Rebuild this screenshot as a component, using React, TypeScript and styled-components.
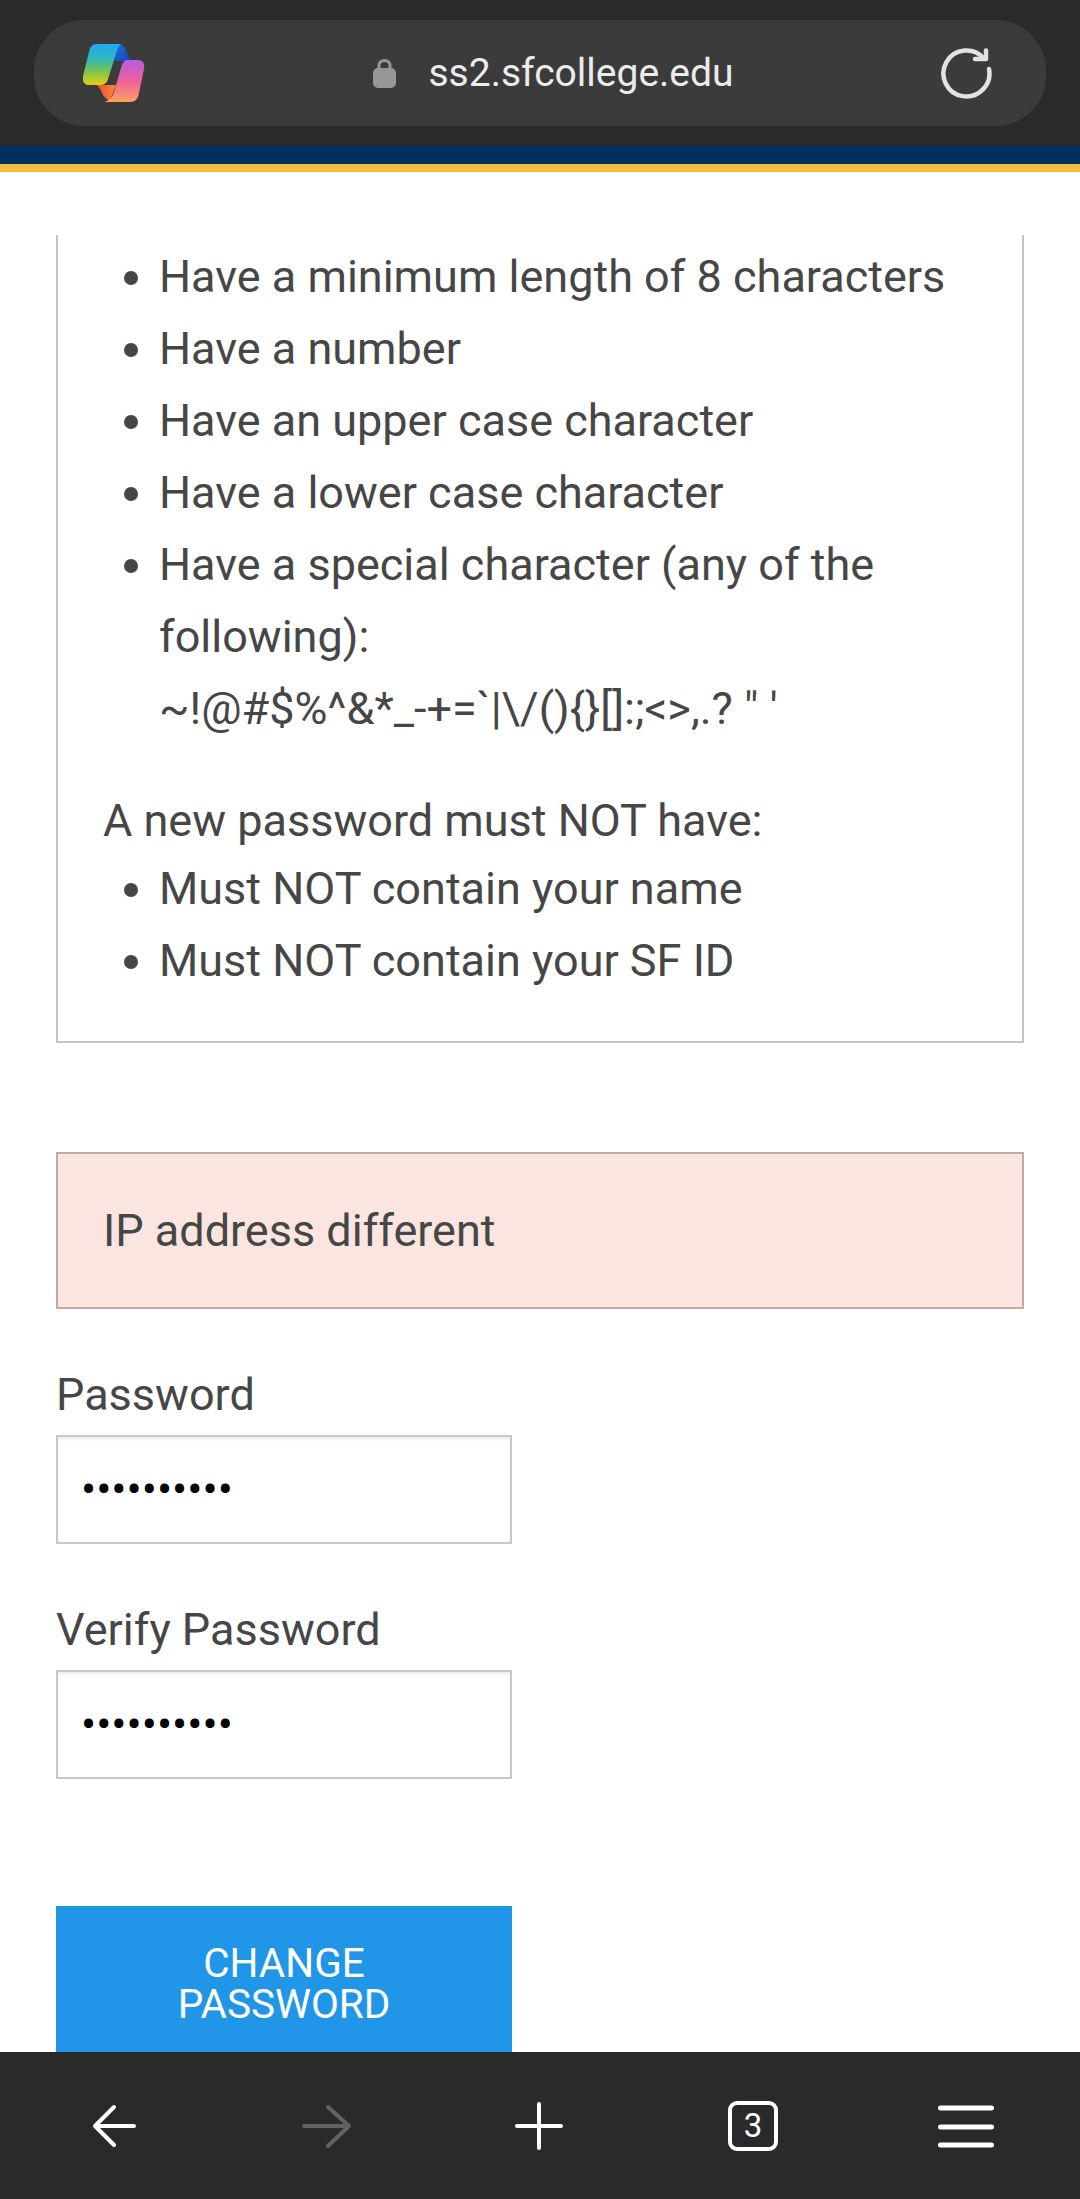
import React from "react";
import styled, { createGlobalStyle } from "styled-components";

const Global = createGlobalStyle`
  html, body { margin: 0; padding: 0; background: #fff; }
  #root { width: 1080px; height: 2199px; }
  * { box-sizing: border-box; }
`;

const Page = styled.div`
  width: 1080px;
  height: 2199px;
  display: flex;
  flex-direction: column;
  overflow: hidden;
  font-family: Roboto, "Liberation Sans", sans-serif;
  color: #464646;
  background: #fff;
`;

const TopBar = styled.header`
  flex: none;
  height: 146px;
  padding: 20px 34px;
  background: #2a2a2a;
`;

const AddressBar = styled.div`
  height: 106px;
  border-radius: 50px;
  background: #3b3b3b;
  display: flex;
  align-items: center;
  padding: 0 54px 0 49px;
`;

const AddressCenter = styled.div`
  flex: 1;
  display: flex;
  align-items: center;
  justify-content: center;
  gap: 32px;
  padding-left: 22px;
`;

const Url = styled.span`
  font-size: 39px;
  color: #ececec;
  line-height: 44px;
`;

const SiteStripe = styled.div`
  flex: none;
  height: 26px;
  background: #00305f;
  border-bottom: 8px solid #f6bb3c;
`;

const Main = styled.main`
  flex: 1;
  min-height: 0;
  overflow: hidden;
  padding: 63px 56px 0;
`;

const InfoCard = styled.section`
  border: 2px solid #c4c4c4;
  border-top: none;
  padding: 6px 46px 44px 45px;
  font-size: 45px;
  line-height: 72px;
`;

const RuleList = styled.ul`
  margin: 0;
  padding: 0 0 0 56px;
`;

const Rule = styled.li``;

const Symbols = styled.span`
  display: block;
`;

const Lead = styled.p`
  margin: 48px 0 4px;
  line-height: 56px;
`;

const Alert = styled.div`
  margin-top: 109px;
  height: 157px;
  padding: 0 45px;
  display: flex;
  align-items: center;
  font-size: 45px;
  background: #fbe5e1;
  border: 2px solid #c2aaa7;
`;

const Field = styled.div<{ $top: number }>`
  margin-top: ${(p) => p.$top}px;
  width: 456px;
`;

const Label = styled.label`
  display: block;
  font-size: 45px;
  line-height: 56px;
  margin-bottom: 12px;
`;

const PasswordInput = styled.input`
  display: block;
  width: 456px;
  height: 109px;
  padding: 0 23px;
  border: 2px solid #c8c8c8;
  outline: none;
  background: #fff;
  box-shadow: inset 0 2px 3px rgba(0, 0, 0, 0.08);
  font-family: Roboto, sans-serif;
  font-size: 45px;
  color: #000;
`;

const SubmitButton = styled.button`
  display: block;
  margin-top: 127px;
  width: 456px;
  padding: 37px 60px;
  border: none;
  background: #2196e9;
  color: #fff;
  font-family: Roboto, sans-serif;
  font-size: 40.5px;
  line-height: 41px;
  text-align: center;
`;

const BottomBar = styled.nav`
  flex: none;
  height: 147px;
  background: #2a2a2a;
  display: flex;
  align-items: center;
  justify-content: space-between;
  padding: 0 84px;
`;

const NavIcon = styled.svg<{ $stroke?: string; $weight?: number }>`
  display: block;
  width: 60px;
  height: 60px;
  fill: none;
  stroke: ${(p) => p.$stroke || "#fff"};
  stroke-width: ${(p) => p.$weight || 4};
  stroke-linecap: round;
  stroke-linejoin: round;
`;

const TabSlot = styled.div`
  width: 60px;
  height: 60px;
  display: flex;
  align-items: center;
  justify-content: center;
`;

const TabBox = styled.div`
  width: 50px;
  height: 50px;
  border: 4px solid #fff;
  border-radius: 9px;
  display: flex;
  align-items: center;
  justify-content: center;
  color: #fff;
  font-size: 33px;
  line-height: 1;
`;

const IconSvg = styled.svg`
  flex: none;
  display: block;
`;

const CopilotLogo = () => (
  <IconSvg width="62" height="60" viewBox="0 0 62 60">
    <defs>
      <linearGradient id="cpA" x1="0" y1="0" x2="0" y2="1">
        <stop offset="0" stopColor="#1fa8f8" />
        <stop offset="0.35" stopColor="#2fb8b8" />
        <stop offset="0.65" stopColor="#74c455" />
        <stop offset="1" stopColor="#e6cf10" />
      </linearGradient>
      <linearGradient id="cpB" x1="0" y1="0" x2="0" y2="1">
        <stop offset="0" stopColor="#b55fe2" />
        <stop offset="0.5" stopColor="#ee609c" />
        <stop offset="1" stopColor="#fda25f" />
      </linearGradient>
      <linearGradient id="cpC" x1="0" y1="0" x2="1" y2="1">
        <stop offset="0" stopColor="#1a78e0" />
        <stop offset="1" stopColor="#143fb0" />
      </linearGradient>
      <linearGradient id="cpD" x1="0" y1="0" x2="1" y2="0">
        <stop offset="0" stopColor="#f4502a" />
        <stop offset="1" stopColor="#f28a3a" />
      </linearGradient>
    </defs>
    <path d="M30 1 H36 C40 1 42 5 44 10 C45 13 47 16 50 18 H32 Z" fill="url(#cpC)" />
    <path d="M14 42 H33 L27 58 C23 56 21 54 19 50 C18 47 16 44 14 42Z" fill="url(#cpD)" />
    <path d="M14 1 H38 C35 3 34 7 32 14 L25 36 C24 40 21 42 17 42 H6 C1 42 -1 38 0 33 L6 9 C7 4 9 1 14 1Z" fill="url(#cpA)" />
    <path d="M43 17 H55 C60 17 62 21 61 26 L56 50 C55 56 52 59 47 59 H21 C27 58 30 53 31 49 L38 25 C39 21 40 19 43 17Z" fill="url(#cpB)" />
  </IconSvg>
);

const LockIcon = () => (
  <IconSvg width="23" height="29" viewBox="0 0 23 29">
    <rect x="0" y="9" width="23" height="20" rx="5" fill="#979797" />
    <path d="M6 11 V6.5 a5.5 5 0 0 1 11 0 V11" fill="none" stroke="#979797" strokeWidth="3" />
  </IconSvg>
);

const ReloadIcon = () => (
  <IconSvg width="52" height="52" viewBox="0 0 52 52" fill="none" stroke="#e2e2e2" strokeWidth="4.5" strokeLinecap="round" strokeLinejoin="round">
    <path d="M49 22 A23 23 0 1 1 44 11.6" />
    <path d="M35 12 H46 V3.5" />
  </IconSvg>
);

export default function App() {
  return (
    <Page>
      <Global />
      <TopBar>
        <AddressBar>
          <CopilotLogo />
          <AddressCenter>
            <LockIcon />
            <Url>ss2.sfcollege.edu</Url>
          </AddressCenter>
          <ReloadIcon />
        </AddressBar>
      </TopBar>
      <SiteStripe />
      <Main>
        <InfoCard>
          <RuleList>
            <Rule>Have a minimum length of 8 characters</Rule>
            <Rule>Have a number</Rule>
            <Rule>Have an upper case character</Rule>
            <Rule>Have a lower case character</Rule>
            <Rule>
              Have a special character (any of the following):
              <Symbols>~!@#$%^&amp;*_-+=`|\/(){"{}"}[]:;&lt;&gt;,.? " '</Symbols>
            </Rule>
          </RuleList>
          <Lead>A new password must NOT have:</Lead>
          <RuleList>
            <Rule>Must NOT contain your name</Rule>
            <Rule>Must NOT contain your SF ID</Rule>
          </RuleList>
        </InfoCard>
        <Alert>IP address different</Alert>
        <Field $top={58}>
          <Label>Password</Label>
          <PasswordInput type="password" value="••••••••••" readOnly />
        </Field>
        <Field $top={58}>
          <Label>Verify Password</Label>
          <PasswordInput type="password" value="••••••••••" readOnly />
        </Field>
        <SubmitButton>CHANGE PASSWORD</SubmitButton>
      </Main>
      <BottomBar>
        <NavIcon viewBox="0 0 60 60">
          <path d="M50 30 H11 M30 11 L11 30 L30 49" />
        </NavIcon>
        <NavIcon viewBox="0 0 60 60" $stroke="#626262">
          <path d="M7 30 H52 M31 11 L52 30 L31 50" />
        </NavIcon>
        <NavIcon viewBox="0 0 60 60">
          <path d="M29 8 V52 M7 30 H51" />
        </NavIcon>
        <TabSlot>
          <TabBox>3</TabBox>
        </TabSlot>
        <NavIcon viewBox="0 0 60 60" $weight={5}>
          <path d="M4.5 12 H55.5 M4.5 31 H55.5 M4.5 49 H55.5" />
        </NavIcon>
      </BottomBar>
    </Page>
  );
}
